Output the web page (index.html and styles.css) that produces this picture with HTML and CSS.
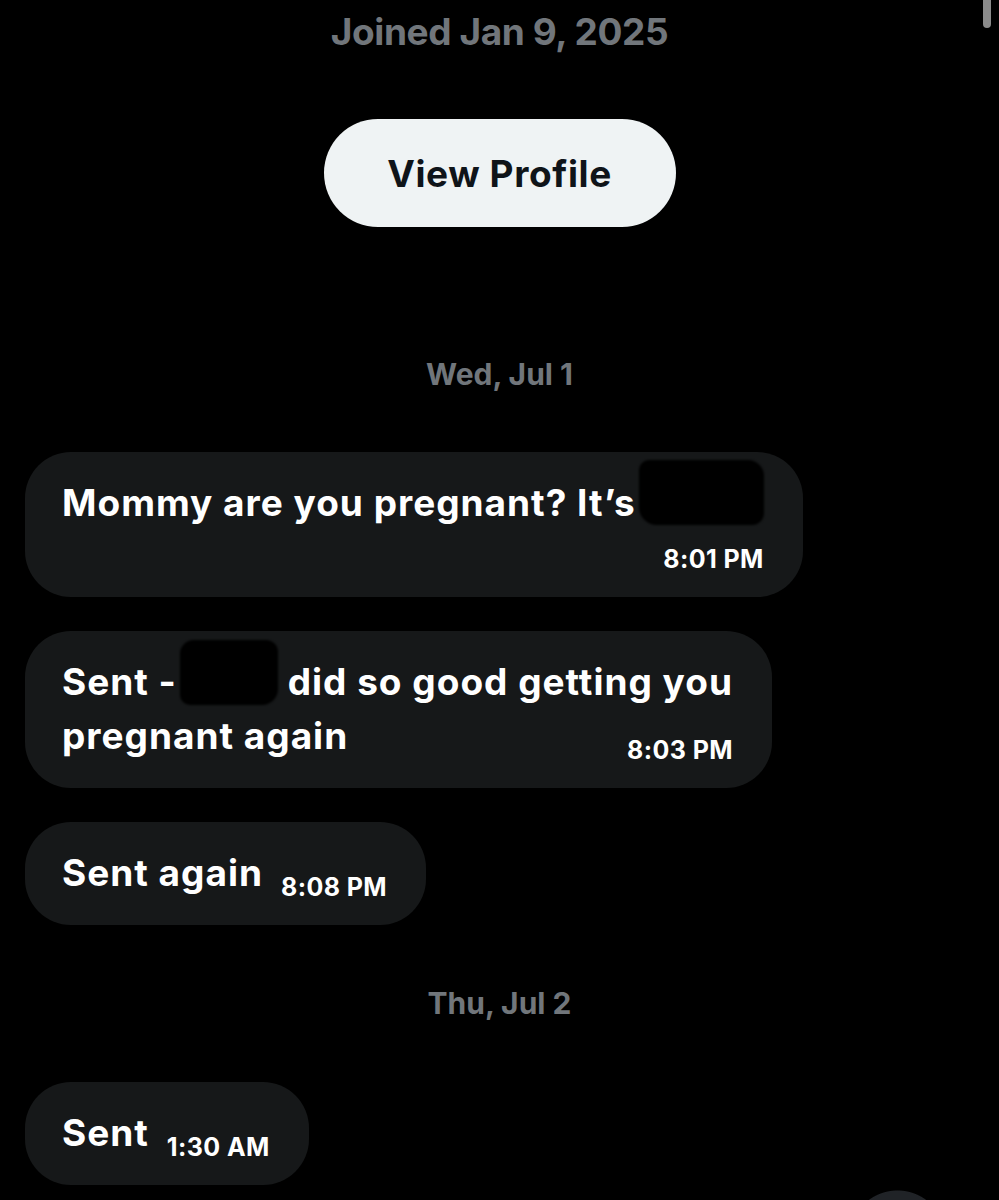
FILE: index.html
```html
<!DOCTYPE html>
<html lang="en">
<head>
<meta charset="utf-8">
<title>Messages</title>
<link rel="stylesheet" href="styles.css">
</head>
<body>
<div class="scroll-thumb"></div>
<main class="chat">
  <section class="profile">
    <p class="joined">Joined Jan 9, 2025</p>
    <button class="view-btn">View Profile</button>
  </section>

  <div class="day day-first">Wed, Jul 1</div>

  <div class="bubble">
    <p class="text">Mommy are you pregnant? It’s<span class="redact redact-a"></span></p>
    <span class="stamp stamp-row">8:01 PM</span>
  </div>

  <div class="bubble">
    <p class="text">Sent -<span class="redact redact-b"></span> did so good getting you<br>pregnant again<span class="stamp stamp-float">8:03 PM</span></p>
  </div>

  <div class="bubble">
    <p class="text">Sent again<span class="stamp stamp-float">8:08 PM</span></p>
  </div>

  <div class="day">Thu, Jul 2</div>

  <div class="bubble">
    <p class="text">Sent<span class="stamp stamp-float">1:30 AM</span></p>
  </div>
</main>
<div class="fab"></div>
</body>
</html>
```

FILE: styles.css
```css
html, body {
  margin: 0;
  padding: 0;
}

body {
  background: #000;
  font-family: Inter, "Noto Sans", "Liberation Sans", sans-serif;
  height: 1200px;
  overflow: hidden;
  position: relative;
}

.chat {
  display: flex;
  flex-direction: column;
  align-items: flex-start;
  padding: 0 25px;
}

.profile {
  align-self: stretch;
  display: flex;
  flex-direction: column;
  align-items: center;
  padding-top: 10px;
}

.joined {
  margin: 0;
  font-size: 37px;
  line-height: 44px;
  font-weight: 700;
  letter-spacing: -0.4px;
  color: #71767b;
}

.view-btn {
  margin-top: 65px;
  width: 352px;
  height: 108px;
  border: 0;
  border-radius: 54px;
  background: #eff3f4;
  color: #0f1419;
  font-family: inherit;
  font-size: 37px;
  font-weight: 700;
  letter-spacing: 0.6px;
  padding: 0;
}

.day {
  align-self: stretch;
  text-align: center;
  font-size: 30px;
  line-height: 36px;
  font-weight: 700;
  color: #71767b;
  margin: 60px 0 61px;
}

.day-first {
  margin-top: 129px;
  margin-bottom: 60px;
}

.bubble {
  box-sizing: border-box;
  max-width: 800px;
  padding: 24px 39px 23px 37px;
  background: #161819;
  border-radius: 46px;
  color: #fff;
  display: flow-root;
}

.bubble + .bubble {
  margin-top: 34px;
}

.text {
  margin: 0;
  font-size: 37px;
  line-height: 54px;
  font-weight: 700;
  letter-spacing: 1px;
  white-space: nowrap;
}

.stamp {
  font-size: 25px;
  line-height: 30px;
  font-weight: 700;
  letter-spacing: 0.4px;
  color: #fff;
}

.stamp-float {
  float: right;
  margin: 26px 0 0 18px;
}

.stamp-row {
  display: block;
  text-align: right;
  margin-top: 14px;
}

.redact {
  display: inline-block;
  background: #000;
  vertical-align: baseline;
  filter: blur(1px);
}

.redact-a {
  width: 125px;
  height: 65px;
  margin: -20px 0 -9px 3px;
  border-radius: 10px 16px 12px 18px;
}

.redact-b {
  width: 98px;
  height: 65px;
  margin: -19px 0 -10px 3px;
  border-radius: 14px 12px 16px 10px;
}

.scroll-thumb {
  position: absolute;
  top: 0;
  right: 8px;
  width: 8px;
  height: 28px;
  background: #8b8b8b;
  border-radius: 0 0 4px 4px;
}

.fab {
  position: absolute;
  left: 849px;
  top: 1190px;
  width: 97px;
  height: 10px;
  background: radial-gradient(circle 48.5px at 50% 48.5px, #202327 98%, transparent 100%);
}
```
